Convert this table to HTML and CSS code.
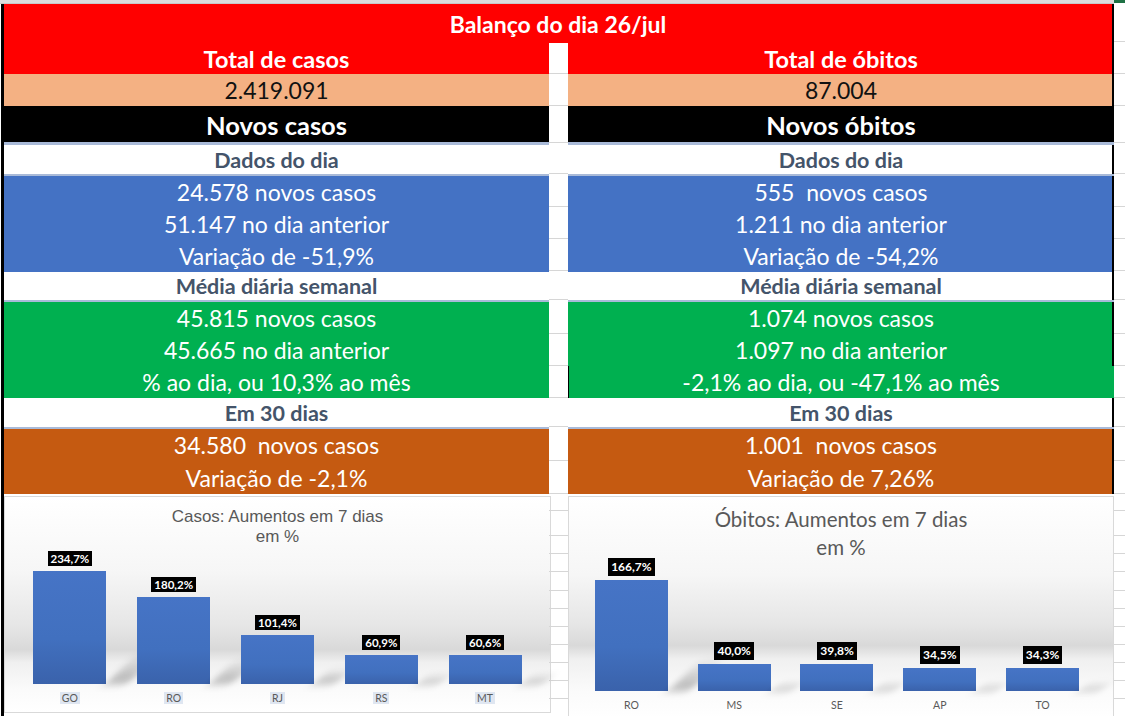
FILE: index.html
```html
<!DOCTYPE html>
<html lang="pt-BR">
<head>
<meta charset="utf-8">
<title>Balanço do dia 26/jul</title>
<link rel="stylesheet" href="styles.css">
</head>
<body>
<div class="sheet">
  <div class="colhead"><div class="fill"></div><div class="sel"></div></div>
  <div class="area">
    <div class="main">
      <div class="title">Balanço do dia 26/jul</div>
      <div class="cols">
        <section class="panel left">
          <div class="row hd">Total de casos</div>
          <div class="row val">2.419.091</div>
          <div class="row nv">Novos casos</div>
          <div class="row lbl">Dados do dia</div>
          <div class="block blue">
            <div class="row ln">24.578 novos casos</div>
            <div class="row ln">51.147 no dia anterior</div>
            <div class="row ln">Variação de -51,9%</div>
          </div>
          <div class="row lbl m">Média diária semanal</div>
          <div class="block green">
            <div class="row ln">45.815 novos casos</div>
            <div class="row ln">45.665 no dia anterior</div>
            <div class="row ln">% ao dia, ou 10,3% ao mês</div>
          </div>
          <div class="row lbl">Em 30 dias</div>
          <div class="block orange">
            <div class="row ln">34.580  novos casos</div>
            <div class="row ln">Variação de -2,1%</div>
          </div>
          <div class="chart c1">
            <div class="ctitle">Casos: Aumentos em 7 dias<br>em %</div>
            <div class="plot">
              <div class="cat"><span class="dl">234,7%</span><div class="bar" style="height:113px"></div><div class="xl"><span>GO</span></div></div>
              <div class="cat"><span class="dl">180,2%</span><div class="bar" style="height:87px"></div><div class="xl"><span>RO</span></div></div>
              <div class="cat"><span class="dl">101,4%</span><div class="bar" style="height:49px"></div><div class="xl"><span>RJ</span></div></div>
              <div class="cat"><span class="dl">60,9%</span><div class="bar" style="height:29px"></div><div class="xl"><span>RS</span></div></div>
              <div class="cat"><span class="dl">60,6%</span><div class="bar" style="height:29px"></div><div class="xl"><span>MT</span></div></div>
            </div>
          </div>
        </section>
        <div class="gap">
          <div class="gl h31"></div><div class="gl h32"></div><div class="gl h37"></div><div class="gl h31"></div>
          <div class="gl h33"></div><div class="gl h32"></div><div class="gl h32"></div><div class="gl h29"></div>
          <div class="gl h34"></div><div class="gl h32"></div><div class="gl h32"></div><div class="gl h29"></div>
          <div class="gl h34"></div><div class="gl h33"></div><div class="gl h17"></div><div class="gl h25"></div>
          <div class="gl h18"></div><div class="gl h18"></div><div class="gl h19"></div><div class="gl h18"></div>
          <div class="gl h18"></div><div class="gl h18"></div><div class="gl h18"></div><div class="gl h18"></div>
          <div class="gl h18"></div><div class="gl h18"></div>
        </div>
        <section class="panel right">
          <div class="row hd">Total de óbitos</div>
          <div class="row val">87.004</div>
          <div class="row nv">Novos óbitos</div>
          <div class="row lbl">Dados do dia</div>
          <div class="block blue">
            <div class="row ln">555  novos casos</div>
            <div class="row ln">1.211 no dia anterior</div>
            <div class="row ln">Variação de -54,2%</div>
          </div>
          <div class="row lbl m">Média diária semanal</div>
          <div class="block green">
            <div class="row ln">1.074 novos casos</div>
            <div class="row ln">1.097 no dia anterior</div>
            <div class="row ln odd">-2,1% ao dia, ou -47,1% ao mês</div>
          </div>
          <div class="row lbl">Em 30 dias</div>
          <div class="block orange">
            <div class="row ln">1.001  novos casos</div>
            <div class="row ln">Variação de 7,26%</div>
          </div>
          <div class="chart c2">
            <div class="ctitle">Óbitos: Aumentos em 7 dias<br>em %</div>
            <div class="plot">
              <div class="cat"><span class="dl">166,7%</span><div class="bar" style="height:111px"></div><div class="xl"><span>RO</span></div></div>
              <div class="cat"><span class="dl">40,0%</span><div class="bar" style="height:27px"></div><div class="xl"><span>MS</span></div></div>
              <div class="cat"><span class="dl">39,8%</span><div class="bar" style="height:27px"></div><div class="xl"><span>SE</span></div></div>
              <div class="cat"><span class="dl">34,5%</span><div class="bar" style="height:23px"></div><div class="xl"><span>AP</span></div></div>
              <div class="cat"><span class="dl">34,3%</span><div class="bar" style="height:23px"></div><div class="xl"><span>TO</span></div></div>
            </div>
          </div>
        </section>
      </div>
    </div>
    <div class="margin">
      <div class="gl h38"></div><div class="gl h32"></div><div class="gl h32"></div><div class="gl h37"></div><div class="gl h31"></div>
      <div class="gl h33"></div><div class="gl h32"></div><div class="gl h32"></div><div class="gl h29"></div>
      <div class="gl h34"></div><div class="gl h32"></div><div class="gl h32"></div><div class="gl h29"></div>
      <div class="gl h34"></div><div class="gl h33"></div><div class="gl h17"></div><div class="gl h25"></div>
      <div class="gl h18"></div><div class="gl h18"></div><div class="gl h19"></div><div class="gl h18"></div>
      <div class="gl h18"></div><div class="gl h18"></div><div class="gl h18"></div><div class="gl h18"></div>
      <div class="gl h18"></div><div class="gl h18"></div>
    </div>
  </div>
</div>
</body>
</html>
```

FILE: styles.css
```css
* { box-sizing: border-box; }
body { margin: 0; background: #fff; }

.sheet {
  width: 1125px;
  height: 716px;
  overflow: hidden;
  background: #fff;
  font-family: Lato, "Open Sans", sans-serif;
}

.colhead { height: 4px; display: flex; }
.colhead .fill { flex: 1; background: #dcdcdc; border-bottom: 1px solid #c8c8c8; }
.colhead .sel { width: 11px; background: #1e7145; height: 3px; }

.area { display: flex; }
.main { width: 1114px; }
.margin { flex: 1; display: flex; flex-direction: column; }

.title {
  margin-left: 1px;
  height: 39px;
  background: #ff0000;
  border-left: 3px solid #000;
  border-right: 2px solid #000;
  color: #fff;
  font-weight: 700;
  font-size: 23px;
  display: flex;
  align-items: center;
  justify-content: center;
}

.cols { display: flex; }
.panel { display: flex; flex-direction: column; }
.panel.left { width: 548px; margin-left: 1px; border-left: 3px solid #000; }
.panel.right { width: 546px; }
.gap { width: 19px; display: flex; flex-direction: column; }

.row {
  display: flex;
  align-items: center;
  justify-content: center;
  white-space: pre;
}
.panel.right .row { box-shadow: inset -2px 0 0 #000; }
.panel.right .row.odd { box-shadow: inset 1px 0 0 #000; }

.hd { height: 31px; background: #ff0000; color: #fff; font-weight: 700; font-size: 23.5px; }
.val { height: 32px; background: #f4b183; color: #111; font-size: 23px; }
.nv {
  height: 39px;
  background: #000;
  color: #fff;
  font-weight: 700;
  font-size: 25.5px;
  border-bottom: 3px solid #a9bad8;
  padding-top: 1px;
}
.lbl {
  height: 31px;
  background: #fff;
  color: #44546a;
  font-weight: 700;
  font-size: 21.5px;
  border-bottom: 2px solid #a9bad8;
}
.lbl.m { height: 30px; }

.block { color: #fff; }
.block .ln { height: 32px; font-size: 23px; }
.orange .ln { height: 32.5px; }
.blue { background: #4472c4; }
.green { background: #00b050; }
.orange { background: #c55a11; }

.gl { border-bottom: 1px solid #d6d6d6; flex: none; }
.h17 { height: 17px; } .h18 { height: 18px; } .h19 { height: 19px; }
.h25 { height: 25px; } .h29 { height: 29px; } .h31 { height: 31px; }
.h32 { height: 32px; } .h33 { height: 33px; } .h34 { height: 34px; }
.h37 { height: 37px; } .h38 { height: 38px; }

/* charts */
.chart {
  margin-top: 2px;
  border: 1px solid #d9d9d9;
  display: flex;
  flex-direction: column;
  flex: none;
}
.c1 {
  height: 217px;
  margin-right: -2px;
  background: linear-gradient(180deg, #ffffff 0%, #f6f6f6 35%, #e6e6e6 60%, #d9d9d9 71%, #f0f0f0 77%, #fbfbfb 90%, #ffffff 100%);
}
.c2 {
  height: 224px;
  background: linear-gradient(180deg, #ffffff 0%, #f6f6f6 35%, #e6e6e6 57%, #d9d9d9 67%, #f0f0f0 73%, #fbfbfb 88%, #ffffff 100%);
}
.ctitle { text-align: center; color: #595959; flex: none; }
.c1 .ctitle {
  font-family: "Liberation Sans", Arial, sans-serif;
  font-size: 17px;
  line-height: 20px;
  padding-top: 10px;
}
.c2 .ctitle {
  font-size: 20.5px;
  line-height: 28px;
  padding-top: 8px;
}
.plot { flex: 1; min-height: 0; display: flex; align-items: flex-end; }
.c1 .plot { padding: 0 13px; }
.c2 .plot { padding: 0 19px 0 11px; }
.cat { flex: 1; display: flex; flex-direction: column; align-items: center; }

.dl {
  background: #000;
  color: #fff;
  font-weight: 700;
  font-size: 11.5px;
  height: 15px;
  line-height: 15px;
  padding: 0 3px;
  margin-bottom: 5px;
}
.c2 .dl { font-size: 12px; height: 18px; line-height: 18px; margin-bottom: 4px; }

.bar {
  width: 73px;
  position: relative;
  background: linear-gradient(180deg, #4674c6 0%, #4170bf 60%, #3a62ab 100%);
}
.bar::after {
  content: "";
  position: absolute;
  left: 100%;
  bottom: 0;
  width: 22px;
  height: 30%;
  max-height: 34px;
  background: linear-gradient(0deg, rgba(0,0,0,0.28), rgba(0,0,0,0));
  transform-origin: bottom left;
  transform: skewX(-45deg);
  filter: blur(4px);
}

.xl {
  height: 28px;
  display: flex;
  align-items: center;
  font-size: 10.5px;
  color: #595959;
}
.c1 .xl span { background: #dfe6f1; padding: 0 2px; line-height: 12px; }
```
